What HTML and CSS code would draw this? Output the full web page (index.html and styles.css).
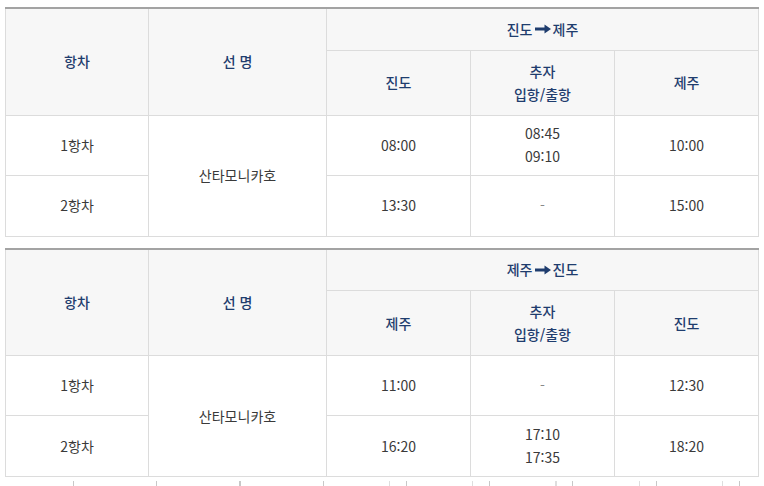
FILE: index.html
```html
<!DOCTYPE html>
<html lang="ko">
<head>
<meta charset="utf-8">
<link rel="stylesheet" href="styles.css">
</head>
<body>
<div class="page">
  <table class="tt">
    <colgroup><col class="c1"><col class="c2"><col class="c3"><col class="c3"><col class="c3"></colgroup>
    <thead>
      <tr class="h1">
        <th rowspan="2">항차</th>
        <th rowspan="2">선 명</th>
        <th colspan="3"><span class="route">진도<svg class="arrow" viewBox="0 0 16 10" width="16" height="10"><path d="M0 3.5h9.5V0.5L16 5l-6.5 4.5V6.5H0z" fill="#1f3d6e"/></svg>제주</span></th>
      </tr>
      <tr class="h2">
        <th>진도</th>
        <th>추자<br>입항/출항</th>
        <th>제주</th>
      </tr>
    </thead>
    <tbody>
      <tr class="r1">
        <td>1항차</td>
        <td rowspan="2">산타모니카호</td>
        <td>08:00</td>
        <td>08:45<br>09:10</td>
        <td>10:00</td>
      </tr>
      <tr class="r2">
        <td>2항차</td>
        <td>13:30</td>
        <td class="dash">-</td>
        <td>15:00</td>
      </tr>
    </tbody>
  </table>

  <table class="tt second">
    <colgroup><col class="c1"><col class="c2"><col class="c3"><col class="c3"><col class="c3"></colgroup>
    <thead>
      <tr class="h1">
        <th rowspan="2">항차</th>
        <th rowspan="2">선 명</th>
        <th colspan="3"><span class="route">제주<svg class="arrow" viewBox="0 0 16 10" width="16" height="10"><path d="M0 3.5h9.5V0.5L16 5l-6.5 4.5V6.5H0z" fill="#1f3d6e"/></svg>진도</span></th>
      </tr>
      <tr class="h2">
        <th>제주</th>
        <th>추자<br>입항/출항</th>
        <th>진도</th>
      </tr>
    </thead>
    <tbody>
      <tr class="r1">
        <td>1항차</td>
        <td rowspan="2">산타모니카호</td>
        <td>11:00</td>
        <td class="dash">-</td>
        <td>12:30</td>
      </tr>
      <tr class="r2">
        <td>2항차</td>
        <td>16:20</td>
        <td>17:10<br>17:35</td>
        <td>18:20</td>
      </tr>
    </tbody>
  </table>
  <div class="ticks"></div>
</div>
</body>
</html>
```

FILE: styles.css
```css
html, body {
  margin: 0;
  padding: 0;
  background: #ffffff;
}
body {
  font-family: "Noto Sans CJK KR", "Noto Sans", sans-serif;
  font-size: 14px;
  color: #3a3a3a;
}
.page {
  padding: 7px 6px 0 5px;
}
.tt {
  width: 753px;
  border-collapse: collapse;
  table-layout: fixed;
  border-top: 2px solid #a3a3a3;
}
.tt.second {
  margin-top: 11px;
}
.c1 { width: 143px; }
.c2 { width: 178px; }
.c3 { width: 144px; }
.tt th, .tt td {
  border: 1px solid #dcdcdc;
  text-align: center;
  vertical-align: middle;
  padding: 0;
  line-height: 23px;
}
.tt th {
  background: #f7f7f7;
  color: #1f3d6e;
  font-weight: 500;
  font-size: 14px;
}
.tt tr.h1 { height: 42px; }
.tt tr.h2 { height: 65px; }
.tt tr.r1 { height: 60px; }
.tt tr.r2 { height: 61px; }
.tt td {
  color: #3a3a3a;
}
.tt td.dash {
  color: #888888;
}
.route {
  display: inline-flex;
  align-items: center;
  gap: 2px;
}
.arrow {
  display: block;
}
.ticks {
  position: relative;
  height: 6px;
  margin-top: 4px;
  margin-left: -5px;
  width: 764px;
  background-image: repeating-linear-gradient(to right, #c8c8c8 0 1px, transparent 1px 83.25px);
  background-position: 73px 0;
  background-repeat: no-repeat;
  background-size: 690px 6px;
}
.ticks::after {
  content: "";
  position: absolute;
  left: 389px;
  top: 0;
  width: 360px;
  height: 6px;
  background-image: repeating-linear-gradient(to right, #dedede 0 1px, transparent 1px 83.25px);
}
```
